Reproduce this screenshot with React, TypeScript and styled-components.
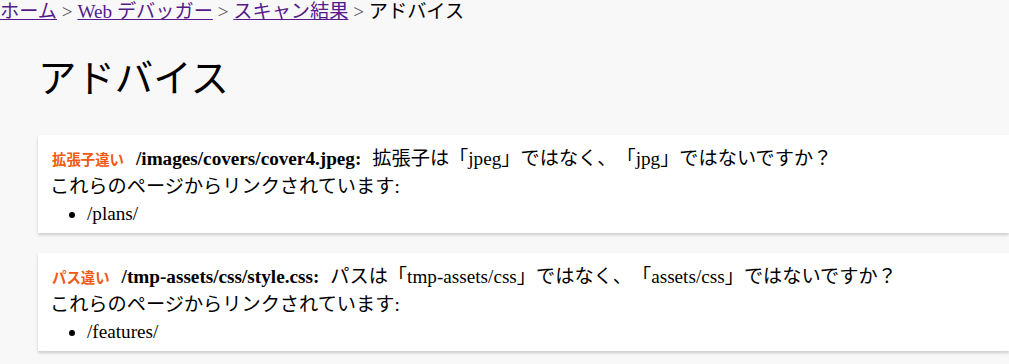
import React from "react";
import styled, { createGlobalStyle } from "styled-components";

const GlobalStyle = createGlobalStyle`
  html, body {
    margin: 0;
    padding: 0;
    background: #f8f8f8;
  }
  body {
    font-family: "Liberation Serif", "Noto Sans CJK JP", serif;
    font-size: 19.2px;
    color: #000;
    text-spacing-trim: space-all;
  }
`;

const Breadcrumb = styled.nav`
  line-height: 24px;
  white-space: nowrap;
`;

const Crumb = styled.a`
  color: #551a8b;
  text-decoration: underline;
`;

const Sep = styled.span`
  color: #555;
`;

const Main = styled.main`
  padding-left: 38px;
`;

const Title = styled.h1`
  font-size: 38.4px;
  font-weight: normal;
  margin: 30px 0 31px 0;
  line-height: 50px;
`;

const Card = styled.section`
  background: #fff;
  box-shadow: 0 2px 3px rgba(0, 0, 0, 0.18);
  padding: 10px 12px 6px 12px;
  margin-bottom: 20px;
`;

const Headline = styled.div`
  display: flex;
  align-items: baseline;
  line-height: 28px;
`;

const Kind = styled.span`
  color: #f05a14;
  font-size: 14.4px;
  font-weight: bold;
  font-family: "Noto Sans CJK JP", sans-serif;
  margin: 0 12px 0 2px;
`;

const Path = styled.strong`
  margin-right: 11px;
`;

const Note = styled.div`
  line-height: 28px;
`;

const Links = styled.ul`
  margin: 0;
  padding-left: 37px;
  line-height: 26px;
`;

type Advice = {
  kind: string;
  path: string;
  message: string;
  pages: string[];
};

const advices: Advice[] = [
  {
    kind: "拡張子違い",
    path: "/images/covers/cover4.jpeg:",
    message: "拡張子は「jpeg」ではなく、「jpg」ではないですか？",
    pages: ["/plans/"],
  },
  {
    kind: "パス違い",
    path: "/tmp-assets/css/style.css:",
    message: "パスは「tmp-assets/css」ではなく、「assets/css」ではないですか？",
    pages: ["/features/"],
  },
];

export default function App() {
  return (
    <>
      <GlobalStyle />
      <Breadcrumb>
        <Crumb href="#">ホーム</Crumb> <Sep>&gt;</Sep>{" "}
        <Crumb href="#">Web デバッガー</Crumb> <Sep>&gt;</Sep>{" "}
        <Crumb href="#">スキャン結果</Crumb> <Sep>&gt;</Sep> アドバイス
      </Breadcrumb>
      <Main>
        <Title>アドバイス</Title>
        {advices.map((a) => (
          <Card key={a.path}>
            <Headline>
              <Kind>{a.kind}</Kind>
              <Path>{a.path}</Path>
              <span>{a.message}</span>
            </Headline>
            <Note>これらのページからリンクされています:</Note>
            <Links>
              {a.pages.map((p) => (
                <li key={p}>{p}</li>
              ))}
            </Links>
          </Card>
        ))}
      </Main>
    </>
  );
}
